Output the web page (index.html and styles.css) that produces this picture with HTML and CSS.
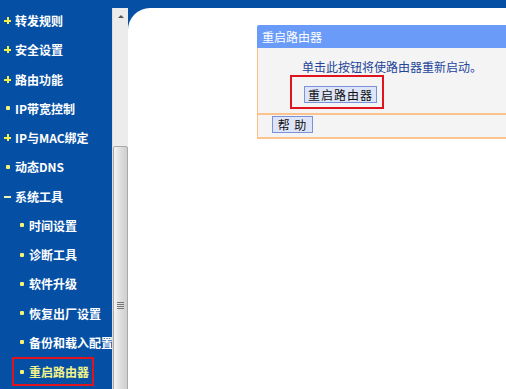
FILE: index.html
```html
<!DOCTYPE html>
<html lang="zh-CN">
<head>
  <meta charset="UTF-8" />
  <title>重启路由器</title>
  <link rel="stylesheet" href="styles.css">
</head>
<body>
  <div class="frame">
    <!-- Left menu -->
    <nav class="menu">
      <ul>
        <li class="item"><span class="plus"></span>转发规则</li>
        <li class="item"><span class="plus"></span>安全设置</li>
        <li class="item"><span class="plus"></span>路由功能</li>
        <li class="item"><span class="dot"></span>IP带宽控制</li>
        <li class="item"><span class="plus"></span>IP与MAC绑定</li>
        <li class="item"><span class="dot"></span>动态DNS</li>
        <li class="item"><span class="minus"></span>系统工具</li>
        <li class="item sub"><span class="dot"></span>时间设置</li>
        <li class="item sub"><span class="dot"></span>诊断工具</li>
        <li class="item sub"><span class="dot"></span>软件升级</li>
        <li class="item sub"><span class="dot"></span>恢复出厂设置</li>
        <li class="item sub"><span class="dot"></span>备份和载入配置</li>
        <li class="item sub active"><span class="dot"></span>重启路由器</li>
      </ul>
    </nav>

    <div class="side">
      <div class="scrollbar">
        <div class="arrow"></div>
        <div class="thumb"><span class="grip"></span></div>
      </div>

      <main class="content">
        <section class="panel">
          <div class="panel-title">重启路由器</div>
          <div class="panel-body">
            <p class="hint">单击此按钮将使路由器重新启动。</p>
            <span class="mark-box"><button class="btn btn-reboot">重启路由器</button></span>
          </div>
          <div class="panel-foot">
            <button class="btn btn-help">帮 助</button>
          </div>
        </section>
      </main>
    </div>
  </div>
</body>
</html>
```

FILE: styles.css
```css
* {
  box-sizing: border-box;
}
body {
  margin: 0;
  width: 506px;
  height: 389px;
  overflow: hidden;
  background: #0550a5;
  font-family: "Noto Sans CJK SC", "Liberation Sans", sans-serif;
  font-size: 12px;
}

.frame {
  display: flex;
  height: 389px;
}

/* Menu */
.menu {
  width: 112px;
  flex: none;
}
.menu ul {
  list-style: none;
  margin: 0;
  padding: 6px 0 0 0;
}
.item {
  display: flex;
  align-items: center;
  height: 29.25px;
  padding-left: 4px;
  color: #fff;
  font-weight: 700;
  white-space: nowrap;
}
.item.sub {
  margin-left: 12px;
  width: 82px;
  padding-left: 8px;
}
.item.active {
  color: #f3f28a;
  outline: 2px solid #e0141f;
  outline-offset: -2px;
}

.plus,
.minus {
  position: relative;
  width: 7px;
  height: 7px;
  margin-right: 4px;
  flex: none;
}
.plus::before,
.plus::after,
.minus::before {
  content: "";
  position: absolute;
  background: #f6f04a;
}
.plus::before,
.minus::before {
  left: 0;
  top: 3px;
  width: 7px;
  height: 2px;
}
.plus::after {
  left: 3px;
  top: 0;
  width: 2px;
  height: 7px;
}
.minus::before {
  background: #f4f2b0;
}
.dot {
  width: 4px;
  height: 4px;
  border-radius: 1px;
  background: #f6f276;
  margin: 0 5px 0 2px;
  flex: none;
}
.item.sub .dot {
  margin: 0 5px 0 0;
}

/* Right side */
.side {
  flex: 1;
  display: flex;
  padding-top: 8px;
  min-width: 0;
}

.scrollbar {
  width: 16px;
  flex: none;
  background: #ececec;
  border-left: 1px solid #dcdcdc;
  display: flex;
  flex-direction: column;
  overflow: hidden;
}
.arrow {
  height: 16px;
  flex: none;
  display: flex;
  justify-content: center;
  align-items: center;
}
.arrow::before {
  content: "";
  border-left: 3px solid transparent;
  border-right: 3px solid transparent;
  border-bottom: 3px solid #555;
}
.thumb {
  flex: none;
  height: 318px;
  margin-top: 122px;
  border: 1px solid #a9a9a9;
  border-radius: 2px;
  background: linear-gradient(to right, #f4f4f4, #dadada 60%, #cfcfcf);
  display: flex;
  justify-content: center;
  align-items: center;
}
.grip {
  width: 7px;
  height: 7px;
  background: repeating-linear-gradient(to bottom, #777 0 1px, transparent 1px 2px);
}

.content {
  flex: 1;
  min-width: 0;
  background: #fff;
  border-top-left-radius: 22px;
  overflow: hidden;
  padding: 17px 0 0 129px;
}

/* Panel */
.panel {
  width: 260px;
}
.panel-title {
  height: 23px;
  line-height: 23px;
  padding-left: 5px;
  background: #6a9bf9;
  color: #fff;
  border-top-left-radius: 2px;
}
.panel-body {
  background: #f4f4f4;
  border-left: 1px solid #fcbf7f;
  border-bottom: 2px solid #fcc48c;
  padding: 11px 0 4px 0;
  height: 67px;
}
.hint {
  margin: 0 0 0 44px;
  line-height: 16px;
  color: #24449a;
}
.mark-box {
  display: inline-block;
  margin-left: 32px;
  padding: 9px 5px 4px 12px;
  border: 2px solid #e0141f;
}
.btn {
  display: block;
  height: 17px;
  padding: 0;
  background: #dfe5f8;
  border: 1px solid #7b92d8;
  font-family: "Noto Sans CJK SC", "Liberation Sans", sans-serif;
  font-size: 12px;
  line-height: 15px;
  color: #111;
  letter-spacing: 1px;
}
.btn-reboot {
  width: 73px;
}
.panel-foot {
  background: #f4f4f4;
  border-left: 1px solid #fcbf7f;
  border-bottom: 2px solid #fcc48c;
  height: 24px;
  padding: 1px 0 0 14px;
}
.btn-help {
  width: 41px;
}
```
